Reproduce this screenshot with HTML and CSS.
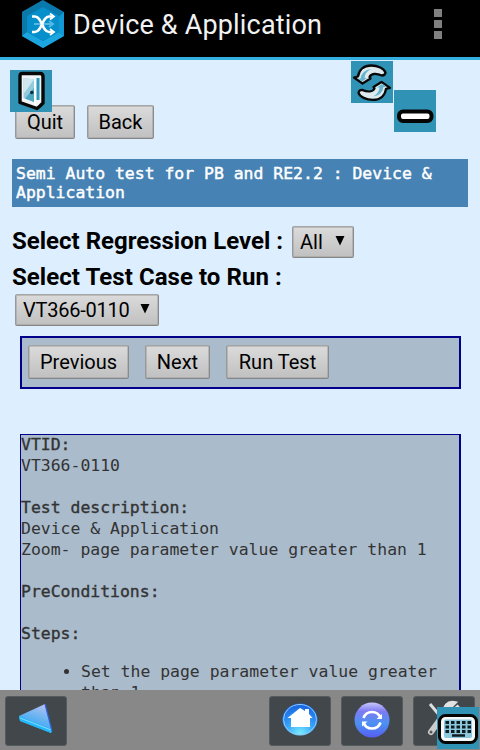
FILE: index.html
```html
<!DOCTYPE html>
<html lang="en">
<head>
<meta charset="utf-8">
<title>Device &amp; Application</title>
<link rel="stylesheet" href="styles.css">
</head>
<body>
<header class="appbar">
  <svg class="logo" width="42" height="48" viewBox="0 0 42 48">
    <path d="M21 0L42 12V36L21 48L0 36V12Z" fill="#0879ae"/>
    <path d="M0 12L21 0V8L5 17V32L0 36Z" fill="#0a79aa"/>
    <path d="M0 36L5 32L21 41L37 32L42 36L21 48Z" fill="#1ca6df"/>
    <path d="M42 12V36L37 32V17Z" fill="#1299d3"/>
    <path d="M21 7L37 16V32L21 41L5 32V16Z" fill="#078fcb"/>
    <path d="M12 24H31M27 21L31 24L27 27" fill="none" stroke="#54b9e4" stroke-width="2"/>
    <path d="M10 16.500H13C20 16.500 20 32 27 32H31M10 32H13C20 32 20 16.500 27 16.500H31" fill="none" stroke="#fff" stroke-width="2.600"/>
    <path d="M28 13.500L32 16.500L28 19.500M28 29L32 32L28 35" fill="none" stroke="#fff" stroke-width="1.800"/>
  </svg>
  <h1 class="title">Device &amp; Application</h1>
  <div class="overflow"><i></i><i></i><i></i></div>
</header>

<main class="page">
  <div class="nav"><button class="btn quit">Quit</button><button class="btn back">Back</button></div>
  <div class="banner">Semi Auto test for PB and RE2.2 : Device &amp; Application</div>
  <div class="row level"><span class="label l1">Select Regression Level :</span><div class="select all"><span>All</span><svg width="10" height="10" viewBox="0 0 10 10"><path d="M0.500 0H9.500L5 9.500Z"/></svg></div></div>
  <div class="row"><span class="label l2">Select Test Case to Run :</span></div>
  <div class="select case"><span>VT366-0110</span><svg width="10" height="10" viewBox="0 0 10 10"><path d="M0.500 0H9.500L5 9.500Z"/></svg></div>
  <div class="controls"><button class="btn prev">Previous</button><button class="btn next">Next</button><button class="btn run">Run Test</button></div>
  <section class="details">
    <b>VTID:</b>
    <p>VT366-0110</p>
    <b class="gap">Test description:</b>
    <p>Device &amp; Application</p>
    <p>Zoom- page parameter value greater than 1</p>
    <b class="gap">PreConditions:</b>
    <b class="gap">Steps:</b>
    <ul><li>Set the page parameter value greater than 1</li></ul>
  </section>
</main>

<footer class="toolbar">
  <div class="tool first">
    <svg width="62" height="50" viewBox="0 0 62 50">
      <defs><linearGradient id="tri" x1=".7" y1="0" x2=".3" y2="1"><stop offset="0" stop-color="#b4c0f3"/><stop offset=".5" stop-color="#5fb2f2"/><stop offset="1" stop-color="#1f9cf4"/></linearGradient></defs>
      <path d="M14 20L40 8L47 35L46 37L15 25Z" fill="url(#tri)"/>
      <path d="M14 20L47 34L46 37L15 25Z" fill="#22b8fa"/>
      <path d="M15 22L46 34" stroke="#7edcff" stroke-width="1"/>
      <path d="M40 8L47 35" stroke="#2c62d8" stroke-width="1.200"/>
    </svg>
  </div>
  <div class="tool">
    <svg width="62" height="50" viewBox="0 0 62 50">
      <defs><radialGradient id="hm" cx=".5" cy=".95" r=".9"><stop offset="0" stop-color="#7cf0ff"/><stop offset=".45" stop-color="#3aa6fb"/><stop offset="1" stop-color="#1764df"/></radialGradient></defs>
      <ellipse cx="31" cy="23.500" rx="17.500" ry="16" fill="url(#hm)"/>
      <ellipse cx="31" cy="23.500" rx="16.500" ry="15" fill="none" stroke="#8dc9ff" stroke-width="1"/>
      <path d="M18.500 22L31 12L36 15V13H40V18L43.500 22H41V31H22V22Z" fill="#fff"/>
    </svg>
  </div>
  <div class="tool">
    <svg width="62" height="50" viewBox="0 0 62 50">
      <defs><linearGradient id="rf" x1="0" y1="0" x2="0" y2="1"><stop offset="0" stop-color="#c9c8fc"/><stop offset=".25" stop-color="#7e7af2"/><stop offset=".6" stop-color="#4b91f3"/><stop offset="1" stop-color="#575df0"/></linearGradient></defs>
      <circle cx="31" cy="24" r="17.500" fill="url(#rf)"/>
      <path d="M22.500 22A9 9 0 0 1 39.500 22M39.500 26.500A9 9 0 0 1 22.500 26.500" fill="none" stroke="#fff" stroke-width="2.600"/>
      <path d="M41 18V23H35.500ZM21 30.500V25.500H26.500Z" fill="#fff"/>
    </svg>
  </div>
  <div class="tool">
    <svg width="62" height="50" viewBox="0 0 62 50">
      <path d="M17 8L32 26" stroke="#ddd" stroke-width="3"/>
      <path d="M18 36L34 14" stroke="#ccc" stroke-width="6" stroke-linecap="round"/>
      <path d="M32 17C31 10 35 6 41 7L37 11L41 14L46 10" fill="none" stroke="#e2e2e2" stroke-width="4"/>
      <circle cx="18" cy="36" r="1.500" fill="#555"/>
    </svg>
  </div>
</footer>

<svg class="float door" width="42" height="42" viewBox="0 0 42 42">
  <path d="M12 3.500H30Q33 3.500 33 6.500V33L30 36L27 38.500L10 32.500V6Q10 3.500 12 3.500Z" fill="#f2f5f7" stroke="#080808" stroke-width="3.400" stroke-linejoin="round"/>
  <path d="M26.500 8H29.500V30H26.500Z" fill="#2f9cbe"/>
  <path d="M13.500 8L24 9.500V32L13.500 28Z" fill="#93cbdc"/>
  <path d="M13.500 8L24 9.500L13.500 24Z" fill="#cfe8ef"/>
  <path d="M15 28.500L24 18V32Z" fill="#4da7c3"/>
  <path d="M25 10V35" stroke="#fff" stroke-width="1.500"/>
  <circle cx="21.800" cy="22.500" r="1.800" fill="#102d3a"/>
</svg>
<svg class="float refresh" width="42" height="42" viewBox="0 0 42 42">
  <g id="arrow">
    <path d="M7 15.500C8 8.500 13 4.500 20 4.500C27 4.500 33 7.500 34.500 11.500Q34 14.500 31 14.500C25 12 20 12.500 18.500 16L19.500 17.500L11.500 22.500L3 16.500Z" fill="#dfeaee" stroke="#080808" stroke-width="2.300" stroke-linejoin="round"/>
    <path d="M11 20.500L6.500 17.500H9.500Q11 9 20 8Q14 11 13.500 17H16Z" fill="#65b5cf"/>
  </g>
  <use href="#arrow" transform="rotate(180 21 21.700)"/>
</svg>
<svg class="float minus" width="42" height="42" viewBox="0 0 42 42">
  <rect x="5" y="21.500" width="32.500" height="9.500" rx="4" fill="#fff" stroke="#050505" stroke-width="4"/>
</svg>
<svg class="float keyboard" width="42" height="42" viewBox="0 0 42 42">
  <rect x="2.500" y="8.500" width="37" height="27" rx="6" fill="#f4f8f9" stroke="#050505" stroke-width="3"/>
  <rect x="7" y="12.500" width="28" height="18.500" rx="2" fill="#8cc8dc"/>
  <path d="M8.500 15.500H34M8.500 20H34M8.500 24.500H34" stroke="#101b20" stroke-width="3.200" stroke-dasharray="3.500 2"/>
  <path d="M15 28.500H28" stroke="#101b20" stroke-width="2.500"/>
</svg>
</body>
</html>
```
FILE: styles.css
```css
* { box-sizing: border-box; }
body {
  margin: 0;
  width: 480px;
  height: 750px;
  position: relative;
  display: flex;
  flex-direction: column;
  overflow: hidden;
  background: #ddeeff;
  font-family: Roboto, sans-serif;
}
.appbar {
  height: 60px;
  flex: none;
  display: flex;
  align-items: flex-start;
  background: #000;
  border-bottom: 3px solid #33b0e0;
  padding-left: 22px;
}
.logo { flex: none; }
.title {
  margin: 9px 0 0 9px;
  width: 355px;
  color: #f2f2f2;
  font-size: 27px;
  font-weight: 400;
  letter-spacing: .17px;
  line-height: 32px;
  white-space: nowrap;
}
.overflow { padding: 9px 0 0 6px; display: flex; flex-direction: column; gap: 3px; }
.overflow i { width: 8px; height: 8px; background: #808080; }
.page { flex: 1; min-height: 0; overflow: hidden; padding: 45px 12px 0; }
.nav { display: flex; gap: 12px; padding-left: 3px; }
.btn, .select {
  height: 34px;
  margin: 0;
  padding: 0;
  border: 1.5px solid #929292;
  border-color: #a5a5a5 #8b8b8b #868686 #999;
  border-radius: 2px;
  box-shadow: inset 0 0 0 .5px #9b9b9b;
  background: linear-gradient(#dbdbdb, #c0c0c0);
  color: #000;
  font-family: Roboto, sans-serif;
  font-size: 20px;
  line-height: 30px;
  white-space: nowrap;
}
.quit { width: 60px; }
.back { width: 67px; }
.banner {
  height: 48px;
  margin-top: 20px;
  padding: 5px 4px;
  background: #4682b4;
  color: #fff;
  font: 16.45px/19px "DejaVu Sans Mono", monospace;
  -webkit-text-stroke: .45px #fff;
}
.row { display: flex; height: 36px; align-items: center; }
.level { margin-top: 16px; }
.label { font-size: 24px; font-weight: 700; white-space: nowrap; }
.l2 { letter-spacing: .06px; }
.select { display: flex; align-items: center; justify-content: space-between; height: 32px; padding: 0 8px 0 7px; line-height: 30px; }
.select svg { position: relative; top: -1px; }
.all { width: 62px; margin-left: 9px; margin-top: 2px; }
.case { width: 144px; margin: -1px 0 0 3px; letter-spacing: -.25px; }
.controls {
  display: flex;
  width: 441px;
  height: 53px;
  margin: 10px 0 0 8px;
  padding: 7px 6px;
  border: 2px solid #00008b;
  background: #aabbcc;
}
.prev { width: 101px; }
.next { width: 65px; margin-left: 16px; }
.run { width: 103px; margin-left: 16px; }
.details {
  width: 441px;
  height: 400px;
  margin: 45px 0 0 8px;
  border: 1px solid #00008b;
  border-right-width: 2px;
  background: #aabbcc;
  color: #333;
  font: 16.45px/21px "DejaVu Sans Mono", monospace;
}
.details b { display: block; font-weight: 400; -webkit-text-stroke: .35px #333; margin-top: -1px; }
.details b.gap { margin-top: 21px; }
.details p { margin: 0; white-space: nowrap; }
.details ul { margin: 17px 0 0; padding: 0 0 0 60px; }
.toolbar {
  flex: none;
  height: 60px;
  display: flex;
  gap: 10px;
  padding: 6px 5px 0;
  background: #888;
}
.tool { flex: none; width: 62px; height: 50px; border: 1px solid #555a5d; border-radius: 3px; background: #41474b; }
.tool svg { display: block; margin: -1px; }
.first { margin-right: 192px; }
.float { position: absolute; background: #3093b5; }
.door { left: 10px; top: 70px; }
.refresh { left: 351px; top: 61px; }
.minus { left: 394px; top: 90px; }
.keyboard { left: 437px; top: 707px; }
```
